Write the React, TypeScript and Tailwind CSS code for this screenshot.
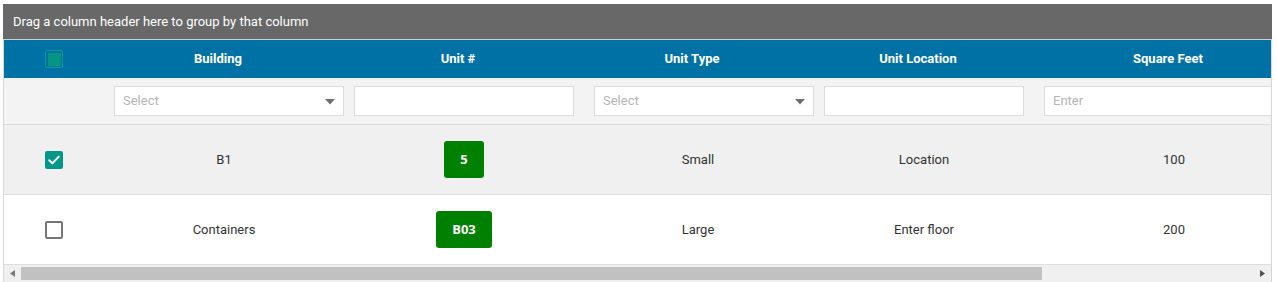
import React from "react";

const font = { fontFamily: "Roboto, 'Liberation Sans', sans-serif" };

function Badge({ text }: { text: string }) {
  return (
    <span
      className="inline-flex h-[37px] items-center justify-center rounded-[3px] bg-[#008000] px-4 text-[13px] font-bold text-white"
      style={{ fontFamily: "'Open Sans', 'DejaVu Sans', sans-serif" }}
    >
      {text}
    </span>
  );
}

function Checkbox({ checked }: { checked: boolean }) {
  if (checked) {
    return (
      <span className="flex h-[18px] w-[18px] items-center justify-center rounded-[2px] bg-[#009688]">
        <svg width="14" height="14" viewBox="0 0 14 14" fill="none">
          <path d="M2.2 7.2 L5.4 10.2 L11.8 3.6" stroke="white" strokeWidth="2" strokeLinecap="round" strokeLinejoin="round" />
        </svg>
      </span>
    );
  }
  return <span className="block h-[18px] w-[18px] rounded-[2px] border-2 border-[#767676] bg-white" />;
}

function SelectBox({ w }: { w: string }) {
  return (
    <div className={`relative flex h-[30px] ${w} shrink-0 items-center border border-[#dcdcdc] bg-white pl-2 text-[13px] text-[#b5b5b5]`}>
      Select
      <svg className="absolute right-[8px] top-[12px]" width="10" height="6" viewBox="0 0 10 6">
        <path d="M0 0 H10 L5 5.5 Z" fill="#6f6f6f" />
      </svg>
    </div>
  );
}

function InputBox({ w, placeholder }: { w: string; placeholder?: string }) {
  return (
    <div className={`flex h-[30px] ${w} shrink-0 items-center border border-[#dcdcdc] bg-white pl-2 text-[13px] text-[#b5b5b5]`}>
      {placeholder}
    </div>
  );
}

const cols = [
  { label: "Building", w: "w-[240px]" },
  { label: "Unit #", w: "w-[240px]" },
  { label: "Unit Type", w: "w-[228px]" },
  { label: "Unit Location", w: "w-[224px]" },
  { label: "Square Feet", w: "w-[276px]" },
];

const rows = [
  { checked: true, building: "B1", unit: "5", type: "Small", loc: "Location", sq: "100", bg: "bg-[#f0f0f0]" },
  { checked: false, building: "Containers", unit: "B03", type: "Large", loc: "Enter floor", sq: "200", bg: "bg-white" },
];

export default function App() {
  return (
    <div className="h-[282px] w-[1277px] bg-white pl-[3px] pt-[4px]" style={font}>
      <div className="w-[1269px]">
        <div className="flex h-[35px] items-center bg-[#686868] pl-[10px] text-[13px] text-white">
          Drag a column header here to group by that column
        </div>
        <div className="border-x border-[#d6d6d6]">
          <div className="overflow-hidden">
            <div className="w-[1320px]">
              {/* header */}
              <div className="flex h-[39px] border-t border-[#d0d0d0] bg-[#0071a4] text-[13px] font-bold text-white">
                <div className="flex w-[100px] shrink-0 items-center justify-center">
                  <span className="flex h-[18px] w-[18px] items-center justify-center rounded-[2px] border border-[#0c9a8a]">
                    <span className="block h-[13px] w-[13px] rounded-[1px] bg-[#069585]" />
                  </span>
                </div>
                {cols.map((c) => (
                  <div key={c.label} className={`flex ${c.w} shrink-0 items-center justify-center pr-[12px]`}>
                    {c.label}
                  </div>
                ))}
              </div>
              {/* filter row */}
              <div className="flex h-[47px] items-center border-b border-[#dedede] bg-[#f3f3f3] pl-[110px]">
                <SelectBox w="w-[230px]" />
                <div className="w-[10px] shrink-0" />
                <InputBox w="w-[220px]" />
                <div className="w-[20px] shrink-0" />
                <SelectBox w="w-[220px]" />
                <div className="w-[10px] shrink-0" />
                <InputBox w="w-[200px]" />
                <div className="w-[20px] shrink-0" />
                <InputBox w="w-[260px]" placeholder="Enter" />
              </div>
              {/* rows */}
              {rows.map((r, i) => (
                <div key={i} className={`flex h-[70px] border-b border-[#dedede] ${r.bg} text-[13px] text-[#333333]`}>
                  <div className="flex w-[100px] shrink-0 items-center justify-center">
                    <Checkbox checked={r.checked} />
                  </div>
                  <div className="flex w-[240px] shrink-0 items-center justify-center">{r.building}</div>
                  <div className="flex w-[240px] shrink-0 items-center justify-center">
                    <Badge text={r.unit} />
                  </div>
                  <div className="flex w-[228px] shrink-0 items-center justify-center">{r.type}</div>
                  <div className="flex w-[224px] shrink-0 items-center justify-center">{r.loc}</div>
                  <div className="flex w-[276px] shrink-0 items-center justify-center">{r.sq}</div>
                </div>
              ))}
            </div>
          </div>
          {/* scrollbar */}
          <div className="flex h-[17px] items-center bg-[#f0f0f0]">
            <div className="flex w-[17px] shrink-0 items-center justify-center">
              <svg width="5" height="7" viewBox="0 0 5 7">
                <path d="M5 0 V7 L0 3.5 Z" fill="#7a7a7a" />
              </svg>
            </div>
            <div className="h-[13px] w-[1021px] shrink-0 bg-[#c1c1c1]" />
            <div className="flex-1" />
            <div className="flex w-[17px] shrink-0 items-center justify-center">
              <svg width="5" height="7" viewBox="0 0 5 7">
                <path d="M0 0 V7 L5 3.5 Z" fill="#505050" />
              </svg>
            </div>
          </div>
        </div>
      </div>
    </div>
  );
}
